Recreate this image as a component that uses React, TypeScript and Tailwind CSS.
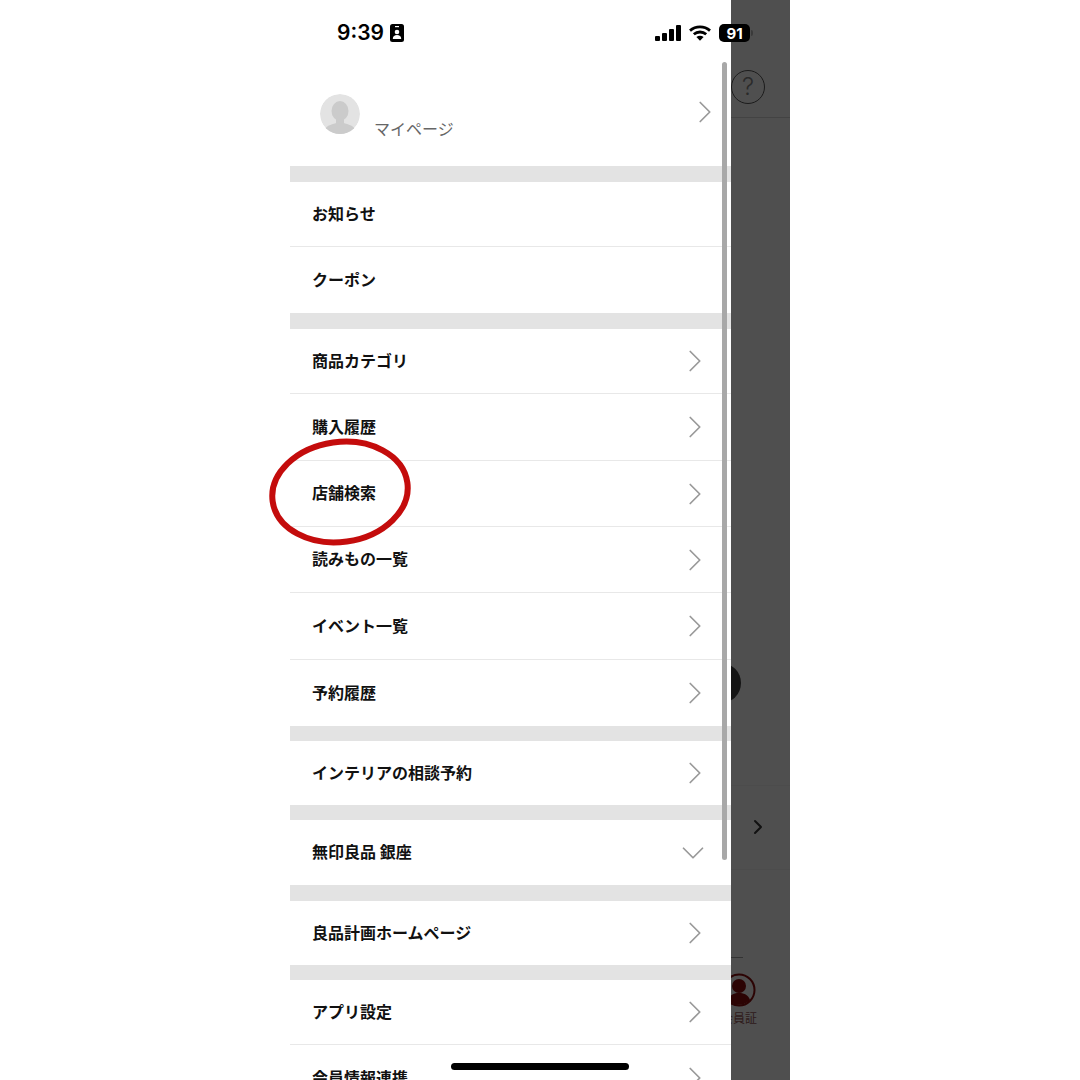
import { ChevronDown, ChevronRight } from "lucide-react";

const font = { fontFamily: '"Noto Sans CJK JP", "Noto Sans", sans-serif' };

type Row = { label: string; icon?: "right" | "down"; h: string };
type Group = { band: string; rows: Row[] };

// each group sits under a grey band
const groups: Group[] = [
  {
    band: "h-[16px]",
    rows: [
      { label: "お知らせ", h: "h-[65px]" },
      { label: "クーポン", h: "h-[66px]" },
    ],
  },
  {
    band: "h-[16px]",
    rows: [
      { label: "商品カテゴリ", icon: "right", h: "h-[65px]" },
      { label: "購入履歴", icon: "right", h: "h-[67px]" },
      { label: "店舗検索", icon: "right", h: "h-[66px]" },
      { label: "読みもの一覧", icon: "right", h: "h-[66px]" },
      { label: "イベント一覧", icon: "right", h: "h-[67px]" },
      { label: "予約履歴", icon: "right", h: "h-[66px]" },
    ],
  },
  { band: "h-[15px]", rows: [{ label: "インテリアの相談予約", icon: "right", h: "h-[64px]" }] },
  { band: "h-[15px]", rows: [{ label: "無印良品 銀座", icon: "down", h: "h-[65px]" }] },
  { band: "h-[16px]", rows: [{ label: "良品計画ホームページ", icon: "right", h: "h-[64px]" }] },
  {
    band: "h-[15px]",
    rows: [
      { label: "アプリ設定", icon: "right", h: "h-[65px]" },
      { label: "会員情報連携", icon: "right", h: "h-[66px]" },
    ],
  },
];

function StatusClock() {
  return (
    <div className="flex h-[62px] shrink-0 items-start pl-[47px] pt-[20px]">
      <span className="text-[21px] font-semibold leading-[26px] text-black" style={{ fontFamily: "Inter, sans-serif" }}>
        9:39
      </span>
      <svg viewBox="0 0 14 18" className="ml-[6px] mt-[4px] h-[18px] w-[14px]">
        <rect width="14" height="18" rx="2.5" fill="#000" />
        <rect x="5" y="2" width="4" height="1.2" fill="#fff" />
        <circle cx="7" cy="8" r="2.3" fill="#fff" />
        <path d="M2.8 15c0-3 1.8-4 4.2-4s4.2 1 4.2 4z" fill="#fff" />
      </svg>
    </div>
  );
}

function StatusIcons() {
  return (
    <div className="absolute left-[365px] top-[24px] flex items-center">
      <svg viewBox="0 0 26 16" className="h-[16px] w-[26px]">
        <rect x="0" y="11" width="5" height="5" rx="1" fill="#000" />
        <rect x="7" y="8" width="5" height="8" rx="1" fill="#000" />
        <rect x="14" y="4" width="5" height="12" rx="1" fill="#000" />
        <rect x="21" y="0" width="5" height="16" rx="1" fill="#000" />
      </svg>
      <svg viewBox="0 0 22 16" className="ml-[8px] h-[16px] w-[22px]">
        <path d="M1 5.6C6.7 0.6 15.3 0.6 21 5.6" fill="none" stroke="#000" strokeWidth="2.8" />
        <path d="M4.8 9.3C8.4 6.2 13.6 6.2 17.2 9.3" fill="none" stroke="#000" strokeWidth="2.8" />
        <path d="M7.4 12 11 15.8 14.6 12C12.5 10.3 9.5 10.3 7.4 12z" fill="#000" />
      </svg>
      <div
        className="ml-[8px] flex h-[18px] w-[31px] items-center justify-center rounded-[5px] bg-black text-[15px] font-bold leading-none text-white"
        style={{ fontFamily: "Inter, sans-serif" }}
      >
        91
      </div>
      <div className="ml-[1px] h-[6px] w-[2px] rounded-r-full bg-[#3a3a3a]" />
    </div>
  );
}

function ProfileRow() {
  return (
    <div className="flex h-[104px] shrink-0 items-start pl-[30px] pr-[17px] pt-[32px]">
      <svg viewBox="0 0 40 40" className="h-[40px] w-[40px] rounded-full">
        <circle cx="20" cy="20" r="20" fill="#e3e3e3" />
        <ellipse cx="20" cy="17" rx="8.5" ry="10" fill="#cbcbcb" />
        <path d="M5 35c2-4 9-5 11-6v-4h8v4c2 1 9 2 11 6a20 20 0 0 1-30 0z" fill="#cbcbcb" />
      </svg>
      <span className="ml-[14px] mt-[22px] text-[16px] leading-[24px] text-[#666]">マイページ</span>
      <ChevronRight className="ml-auto mt-[-1px] h-[38px] w-[38px] translate-x-[10px] text-[#999]" strokeWidth={1.1} />
    </div>
  );
}

function MenuRow({ row, last }: { row: Row; last: boolean }) {
  return (
    <div className={`flex shrink-0 items-center pl-[22px] pr-[17px] ${row.h} ${last ? "" : "border-b border-[#e8e8e8]"}`}>
      <span className="pb-[3px] text-[16px] font-bold leading-[24px] text-[#111]">{row.label}</span>
      {row.icon === "right" && <ChevronRight className="ml-auto h-[38px] w-[38px] text-[#999]" strokeWidth={1.1} />}
      {row.icon === "down" && (
        <ChevronDown className="ml-auto h-[38px] w-[38px] translate-x-[-2px] text-[#999]" strokeWidth={1.1} />
      )}
    </div>
  );
}

function BehindPanel() {
  return (
    <div className="flex h-[1080px] w-[59px] shrink-0 flex-col overflow-hidden bg-[#4f4f4f]" style={font}>
      <div className="flex h-[118px] shrink-0 items-start border-b border-[#434343] pt-[70px]">
        <div
          className="flex h-[34px] w-[34px] items-center justify-center rounded-full border-[1.5px] border-[#1c1c1c] text-[24px] font-light leading-none text-[#2a2a2a]"
          style={{ fontFamily: "Inter, sans-serif" }}
        >
          ?
        </div>
      </div>
      <div className="ml-[-30px] mt-[545px] h-[40px] w-[40px] shrink-0 rounded-full bg-[#141414]" />
      <div className="mt-[82px] h-px shrink-0 bg-[#4c4c4c]" />
      <ChevronRight className="ml-[15px] mt-[29px] h-[24px] w-[24px] shrink-0 text-[#111]" strokeWidth={2} />
      <div className="mt-[30px] h-px shrink-0 bg-[#4c4c4c]" />
      <div className="mt-[87px] h-px w-[12px] shrink-0 bg-[#333]" />
      <svg viewBox="0 0 34 34" className="ml-[-9px] mt-[15px] h-[34px] w-[34px] shrink-0">
        <circle cx="17" cy="17" r="15.5" fill="none" stroke="#2c0404" strokeWidth="2" />
        <circle cx="17" cy="13" r="7" fill="#2c0404" />
        <path d="M6 27c2-6 7-7 11-7s9 1 11 7a15 15 0 0 1-22 0z" fill="#2c0404" />
      </svg>
      <span className="ml-[-10px] mt-[2px] w-[36px] whitespace-nowrap text-[12px] leading-[18px] text-[#2e1a1a]">会員証</span>
    </div>
  );
}

export default function App() {
  return (
    <div className="flex h-[1080px] w-[1080px] justify-center overflow-hidden bg-white" style={font}>
      <div className="relative flex h-[1080px] w-[500px]">
        <div className="flex h-[1080px] w-[441px] shrink-0 flex-col overflow-hidden bg-white">
          <StatusClock />
          <ProfileRow />
          {groups.map((g, i) => (
            <div key={i} className="shrink-0">
              <div className={`${g.band} bg-[#e3e3e3]`} />
              {g.rows.map((row, j) => (
                <MenuRow key={row.label} row={row} last={j === g.rows.length - 1} />
              ))}
            </div>
          ))}
        </div>
        <BehindPanel />

        <StatusIcons />
        {/* scrollbar */}
        <div className="absolute left-[432px] top-[62px] h-[798px] w-[5px] rounded-full bg-[#a8a8a8]" />
        {/* red marker circled by hand */}
        <svg viewBox="0 0 150 116" className="absolute left-[-25px] top-[434px] h-[116px] w-[150px]">
          <ellipse cx="75" cy="58" rx="68" ry="50" transform="rotate(-8 75 58)" fill="none" stroke="#c40c0c" strokeWidth="6" />
        </svg>
        {/* home indicator */}
        <div className="absolute left-[161px] top-[1063px] h-[7px] w-[178px] rounded-full bg-black" />
      </div>
    </div>
  );
}
